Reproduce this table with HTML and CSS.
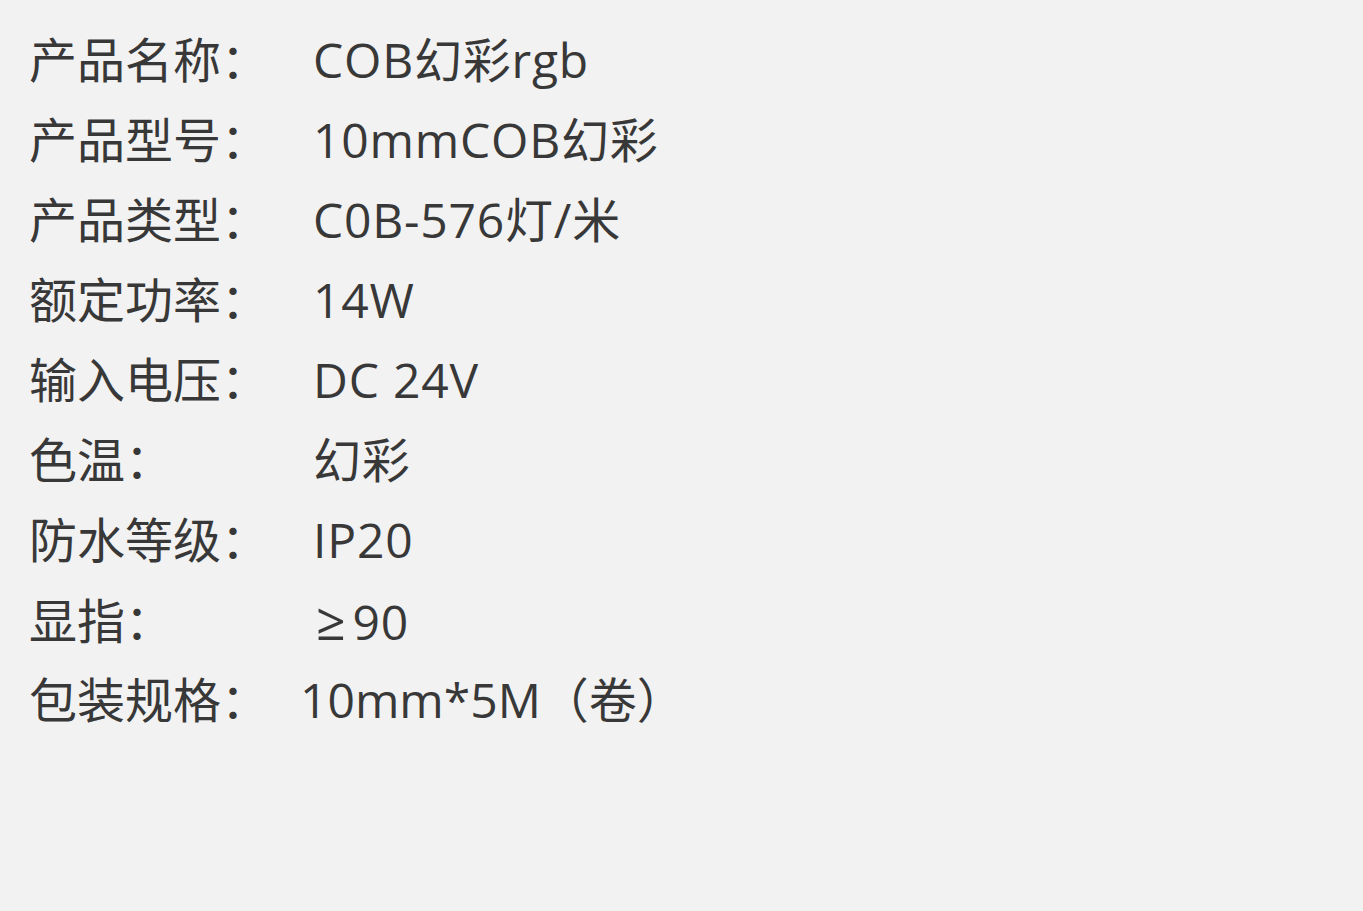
FILE: index.html
```html
<!DOCTYPE html>
<html lang="zh-CN">
<head>
<meta charset="utf-8">
<title>产品参数</title>
<link rel="stylesheet" href="styles.css">
</head>
<body>
<dl class="specs">
  <div class="row"><dt class="label">产品名称：</dt><dd class="value">COB幻彩rgb</dd></div>
  <div class="row"><dt class="label">产品型号：</dt><dd class="value">10mmCOB幻彩</dd></div>
  <div class="row"><dt class="label">产品类型：</dt><dd class="value">C0B-576灯/米</dd></div>
  <div class="row"><dt class="label">额定功率：</dt><dd class="value">14W</dd></div>
  <div class="row"><dt class="label">输入电压：</dt><dd class="value">DC 24V</dd></div>
  <div class="row"><dt class="label">色温：</dt><dd class="value">幻彩</dd></div>
  <div class="row"><dt class="label">防水等级：</dt><dd class="value">IP20</dd></div>
  <div class="row"><dt class="label">显指：</dt><dd class="value value-ge"><span class="ge">≥</span>90</dd></div>
  <div class="row"><dt class="label">包装规格：</dt><dd class="value value-pack">10mm*5M（卷）</dd></div>
</dl>
</body>
</html>
```
FILE: styles.css
```css
html, body {
  margin: 0;
  padding: 0;
  background: #f2f2f2;
}
body {
  width: 1363px;
  height: 911px;
  overflow: hidden;
  font-family: "Open Sans", "Noto Sans CJK SC", sans-serif;
  color: #383838;
}
.specs {
  margin: 0;
  padding: 20px 0 0 29px;
  display: flex;
  flex-direction: column;
}
.row {
  display: grid;
  grid-template-columns: 284px auto;
  height: 80px;
  align-items: center;
  font-size: 48px;
  line-height: 80px;
}
.label, .value {
  margin: 0;
  white-space: nowrap;
}
.value {
  letter-spacing: 0.8px;
}
.value-ge {
  padding-left: 3px;
}
.ge {
  margin-right: 6px;
  font-size: 52px;
}
.value-pack {
  margin-left: -13px;
  letter-spacing: 0;
}
```
